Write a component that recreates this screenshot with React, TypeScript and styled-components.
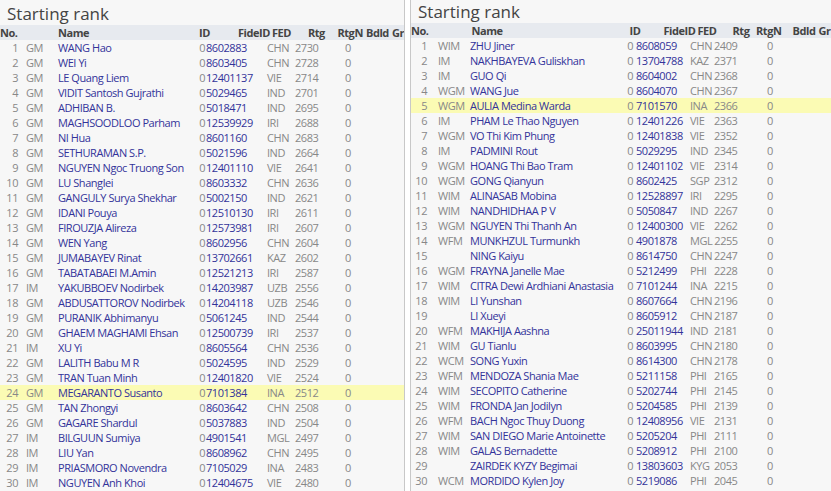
import React from "react"
import styled, { createGlobalStyle } from "styled-components"

const Global = createGlobalStyle`
  body { margin: 0; background: #fff; font-family: "Open Sans", "Noto Sans", sans-serif; overflow: hidden; }
`

type Col = { w: number; pad: number; right?: boolean; headRight?: boolean; headPad?: number; blue?: boolean }

const Page = styled.div`
  display: grid;
  grid-template-columns: 405px 421px;
  column-gap: 5px;
  height: 491px;
  overflow: hidden;
`

const Panel = styled.div<{ $top: number; $side: "left" | "right" }>`
  background: #f7f7f7;
  padding-top: ${({ $top }) => $top}px;
  border-${({ $side }) => ($side === "left" ? "right" : "left")}: 1px solid #c8c8c8;
  overflow: hidden;
`

const Title = styled.div`
  font-size: 17px;
  color: #444;
  padding-left: 7px;
  height: 23px;
  line-height: 23px;
`

const Row = styled.div<{ $head?: boolean; $hl?: boolean }>`
  display: flex;
  height: 15px;
  line-height: 15px;
  font-size: 11px;
  letter-spacing: -0.45px;
  white-space: nowrap;
  background: ${({ $head, $hl }) => ($head ? "#e7eaef" : $hl ? "#fbfbb4" : "transparent")};
  color: ${({ $head }) => ($head ? "#444" : "#888")};
  font-weight: ${({ $head }) => ($head ? 700 : 400)};
`

const Cell = styled.span<{ $w: number; $pad: number; $right?: boolean; $blue?: boolean }>`
  flex: 0 0 ${({ $w }) => $w}px;
  box-sizing: border-box;
  padding-${({ $right }) => ($right ? "right" : "left")}: ${({ $pad }) => $pad}px;
  text-align: ${({ $right }) => ($right ? "right" : "left")};
  color: ${({ $blue }) => ($blue ? "#33339a" : "inherit")};
  overflow: visible;
`

type P = [string, string, string, string, string, string]

const leftData: P[] = [
  ["1", "GM", "WANG Hao", "8602883", "CHN", "2730"],
  ["2", "GM", "WEI Yi", "8603405", "CHN", "2728"],
  ["3", "GM", "LE Quang Liem", "12401137", "VIE", "2714"],
  ["4", "GM", "VIDIT Santosh Gujrathi", "5029465", "IND", "2701"],
  ["5", "GM", "ADHIBAN B.", "5018471", "IND", "2695"],
  ["6", "GM", "MAGHSOODLOO Parham", "12539929", "IRI", "2688"],
  ["7", "GM", "NI Hua", "8601160", "CHN", "2683"],
  ["8", "GM", "SETHURAMAN S.P.", "5021596", "IND", "2664"],
  ["9", "GM", "NGUYEN Ngoc Truong Son", "12401110", "VIE", "2641"],
  ["10", "GM", "LU Shanglei", "8603332", "CHN", "2636"],
  ["11", "GM", "GANGULY Surya Shekhar", "5002150", "IND", "2621"],
  ["12", "GM", "IDANI Pouya", "12510130", "IRI", "2611"],
  ["13", "GM", "FIROUZJA Alireza", "12573981", "IRI", "2607"],
  ["14", "GM", "WEN Yang", "8602956", "CHN", "2604"],
  ["15", "GM", "JUMABAYEV Rinat", "13702661", "KAZ", "2602"],
  ["16", "GM", "TABATABAEI M.Amin", "12521213", "IRI", "2587"],
  ["17", "IM", "YAKUBBOEV Nodirbek", "14203987", "UZB", "2556"],
  ["18", "GM", "ABDUSATTOROV Nodirbek", "14204118", "UZB", "2546"],
  ["19", "GM", "PURANIK Abhimanyu", "5061245", "IND", "2544"],
  ["20", "GM", "GHAEM MAGHAMI Ehsan", "12500739", "IRI", "2537"],
  ["21", "IM", "XU Yi", "8605564", "CHN", "2536"],
  ["22", "GM", "LALITH Babu M R", "5024595", "IND", "2529"],
  ["23", "GM", "TRAN Tuan Minh", "12401820", "VIE", "2524"],
  ["24", "GM", "MEGARANTO Susanto", "7101384", "INA", "2512"],
  ["25", "GM", "TAN Zhongyi", "8603642", "CHN", "2508"],
  ["26", "GM", "GAGARE Shardul", "5037883", "IND", "2504"],
  ["27", "IM", "BILGUUN Sumiya", "4901541", "MGL", "2497"],
  ["28", "IM", "LIU Yan", "8608962", "CHN", "2495"],
  ["29", "IM", "PRIASMORO Novendra", "7105029", "INA", "2483"],
  ["30", "IM", "NGUYEN Anh Khoi", "12404675", "VIE", "2480"],
]

const rightData: P[] = [
  ["1", "WIM", "ZHU Jiner", "8608059", "CHN", "2409"],
  ["2", "IM", "NAKHBAYEVA Guliskhan", "13704788", "KAZ", "2371"],
  ["3", "IM", "GUO Qi", "8604002", "CHN", "2368"],
  ["4", "WGM", "WANG Jue", "8604070", "CHN", "2367"],
  ["5", "WGM", "AULIA Medina Warda", "7101570", "INA", "2366"],
  ["6", "IM", "PHAM Le Thao Nguyen", "12401226", "VIE", "2363"],
  ["7", "WGM", "VO Thi Kim Phung", "12401838", "VIE", "2352"],
  ["8", "IM", "PADMINI Rout", "5029295", "IND", "2345"],
  ["9", "WGM", "HOANG Thi Bao Tram", "12401102", "VIE", "2314"],
  ["10", "WGM", "GONG Qianyun", "8602425", "SGP", "2312"],
  ["11", "WIM", "ALINASAB Mobina", "12528897", "IRI", "2295"],
  ["12", "WIM", "NANDHIDHAA P V", "5050847", "IND", "2267"],
  ["13", "WGM", "NGUYEN Thi Thanh An", "12400300", "VIE", "2262"],
  ["14", "WFM", "MUNKHZUL Turmunkh", "4901878", "MGL", "2255"],
  ["15", "", "NING Kaiyu", "8614750", "CHN", "2247"],
  ["16", "WGM", "FRAYNA Janelle Mae", "5212499", "PHI", "2228"],
  ["17", "WIM", "CITRA Dewi Ardhiani Anastasia", "7101244", "INA", "2215"],
  ["18", "WIM", "LI Yunshan", "8607664", "CHN", "2196"],
  ["19", "", "LI Xueyi", "8605912", "CHN", "2187"],
  ["20", "WFM", "MAKHIJA Aashna", "25011944", "IND", "2181"],
  ["21", "WIM", "GU Tianlu", "8603995", "CHN", "2180"],
  ["22", "WCM", "SONG Yuxin", "8614300", "CHN", "2178"],
  ["23", "WFM", "MENDOZA Shania Mae", "5211158", "PHI", "2165"],
  ["24", "WIM", "SECOPITO Catherine", "5202744", "PHI", "2145"],
  ["25", "WIM", "FRONDA Jan Jodilyn", "5204585", "PHI", "2139"],
  ["26", "WFM", "BACH Ngoc Thuy Duong", "12408956", "VIE", "2131"],
  ["27", "WIM", "SAN DIEGO Marie Antoinette", "5205204", "PHI", "2111"],
  ["28", "WIM", "GALAS Bernadette", "5208912", "PHI", "2100"],
  ["29", "", "ZAIRDEK KYZY Begimai", "13803603", "KYG", "2053"],
  ["30", "WCM", "MORDIDO Kylen Joy", "5219086", "PHI", "2045"],
  ["31", "WCM", "ISHA Sharma", "25006665", "IND", "2030"],
]

const heads = ["No.", "", "Name", "ID", "FideID", "FED", "Rtg", "RtgN", "Bdld", "Gr"]

const RankTable = ({ data, cols, top, side, hl }: { data: P[]; cols: Col[]; top: number; side: "left" | "right"; hl: string }) => (
  <Panel $top={top} $side={side}>
    <Title>Starting rank</Title>
    <Row $head>
      {heads.map((h, i) => (
        <Cell key={i} $w={cols[i].w} $pad={cols[i].headPad ?? 0} $right={cols[i].headRight}>
          {h}
        </Cell>
      ))}
    </Row>
    {data.map((r) => {
      const vals = [r[0], r[1], r[2], "0", r[3], r[4], r[5], "0", "", ""]
      return (
        <Row key={r[0]} $hl={r[0] === hl}>
          {vals.map((v, i) => (
            <Cell key={i} $w={cols[i].w} $pad={cols[i].pad} $right={cols[i].right} $blue={cols[i].blue}>
              {v}
            </Cell>
          ))}
        </Row>
      )
    })}
  </Panel>
)

const leftCols: Col[] = [
  { w: 18, pad: 0, right: true },
  { w: 40, pad: 8 },
  { w: 140, pad: 0, blue: true },
  { w: 7, pad: 0, right: true, headPad: 1 },
  { w: 60, pad: 1, blue: true, headRight: true },
  { w: 27, pad: 2, headPad: 2 },
  { w: 28, pad: 3, headRight: true },
  { w: 38, pad: 25, headRight: true },
  { w: 26, pad: 0, headRight: true },
  { w: 20, pad: 0, headPad: 3 },
]

const rightCols: Col[] = [
  { w: 16, pad: 0, right: true },
  { w: 43, pad: 11 },
  { w: 155, pad: 0, blue: true },
  { w: 8, pad: 0, right: true, headPad: 3 },
  { w: 55, pad: 3, blue: true, headRight: true },
  { w: 24, pad: 2, headPad: 2 },
  { w: 30, pad: 2, headRight: true },
  { w: 32, pad: 25, headRight: true },
  { w: 34, pad: 0, headRight: true },
  { w: 20, pad: 0, headPad: 3 },
]

export default function App() {
  return (
    <>
      <Global />
      <Page>
        <RankTable data={leftData} cols={leftCols} top={2} side="left" hl="24" />
        <RankTable data={rightData} cols={rightCols} top={-4} side="right" hl="5" />
      </Page>
    </>
  )
}
